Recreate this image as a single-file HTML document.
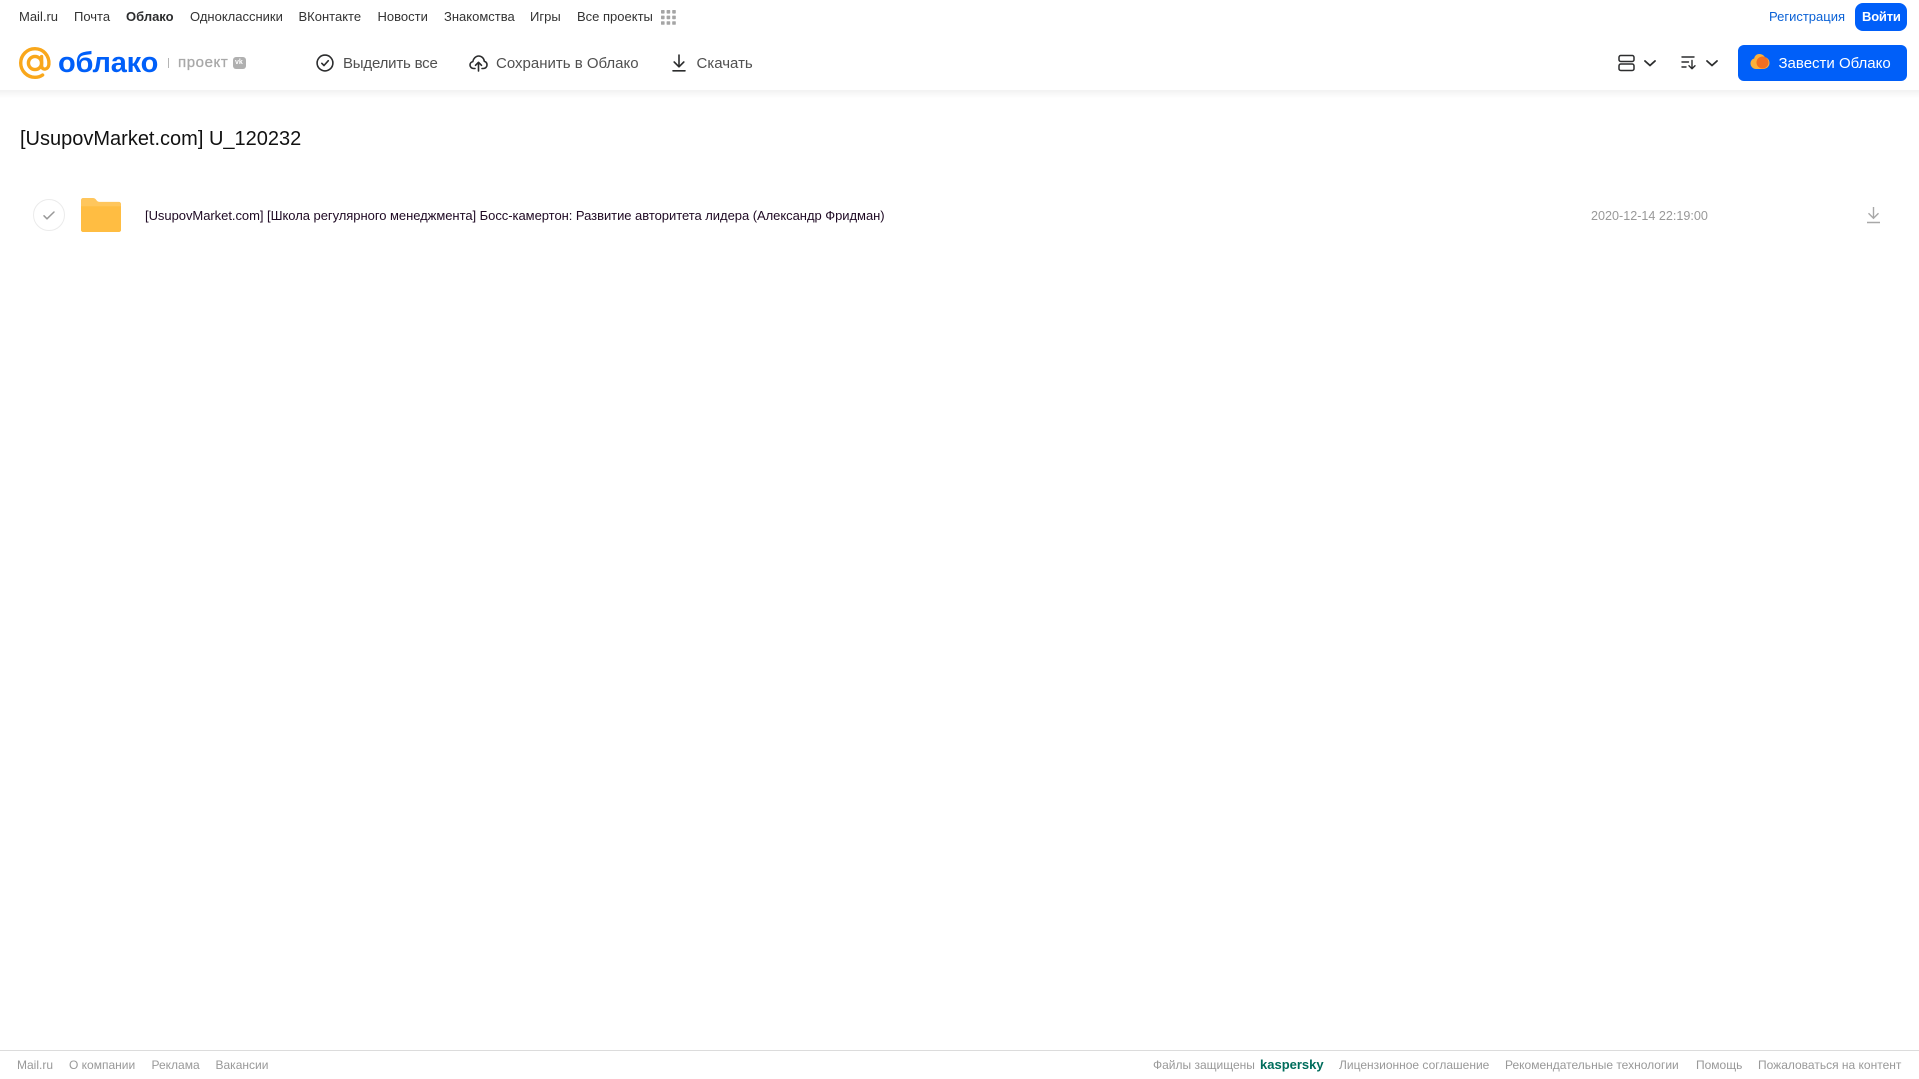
<!DOCTYPE html>
<html lang="ru">
<head>
<meta charset="utf-8">
<title>[UsupovMarket.com] U_120232</title>
<style>
html,body{margin:0;padding:0;background:#fff;}
body{position:relative;width:1919px;height:1079px;overflow:hidden;font-family:"Liberation Sans",Arial,sans-serif;color:#2c2d2e;filter:blur(.3px);}
a,span.t,h1,div.t{position:absolute;white-space:nowrap;text-decoration:none;margin:0;font-weight:400;}
svg{position:absolute;display:block;}
.n{top:9px;font-size:13px;line-height:16px;color:#333;}
.tb{top:55px;font-size:15px;line-height:18px;color:#505050;}
.f{top:1057px;font-size:12px;line-height:16px;color:#999;}
#shadow{position:absolute;left:0;top:90px;width:1919px;height:8px;background:linear-gradient(#f2f2f2,#fff);}
#fl{position:absolute;left:0;top:1050px;width:1919px;height:1px;background:#dcdcdc;}
.b{position:absolute;background:#005ff9;}
</style>
</head>
<body>
<div id="shadow"></div>
<a class="n" style="left:19px">Mail.ru</a>
<a class="n" style="left:74px">Почта</a>
<a class="n" style="left:126px;font-weight:700;color:#2c2d2e">Облако</a>
<a class="n" style="left:190px">Одноклассники</a>
<a class="n" style="left:298.500px">ВКонтакте</a>
<a class="n" style="left:377.500px">Новости</a>
<a class="n" style="left:444px">Знакомства</a>
<a class="n" style="left:530px">Игры</a>
<a class="n" style="left:577px">Все проекты</a>
<svg style="left:661px;top:10px" width="15" height="15" viewBox="0 0 15 15" fill="#a5a5a5"><rect x="0" y="0" width="3.6" height="3.6" rx=".7"/><rect x="5.6" y="0" width="3.6" height="3.6" rx=".7"/><rect x="11.2" y="0" width="3.6" height="3.6" rx=".7"/><rect x="0" y="5.6" width="3.6" height="3.6" rx=".7"/><rect x="5.6" y="5.6" width="3.6" height="3.6" rx=".7"/><rect x="11.2" y="5.6" width="3.6" height="3.6" rx=".7"/><rect x="0" y="11.2" width="3.6" height="3.6" rx=".7"/><rect x="5.6" y="11.2" width="3.6" height="3.6" rx=".7"/><rect x="11.2" y="11.2" width="3.6" height="3.6" rx=".7"/></svg>
<a class="n" style="left:1769px;color:#0b62d6">Регистрация</a>
<div class="b" style="left:1855px;top:3px;width:52px;height:28px;border-radius:8px"></div>
<a class="n" style="left:1862px;color:#fff;font-weight:700;font-size:13px;letter-spacing:-.2px">Войти</a>

<svg style="left:18px;top:46px" width="34" height="34" viewBox="0 0 34 34" fill="none"><circle cx="17" cy="17" r="6.6" stroke="#f9a71b" stroke-width="3.4"/><path d="M23.6 10.6V19.6C23.6 24.6 30.4 24.2 30.9 18.4C31.6 9.4 25 2.7 17 2.7C9.100 2.7 2.700 9.100 2.700 17C2.700 24.900 9.100 31.300 17 31.300C20 31.300 22.500 30.500 24.600 29" stroke="#f9a71b" stroke-width="3.400" stroke-linecap="round"/></svg>
<span class="t" style="left:58px;top:45px;font-size:29px;line-height:36px;font-weight:700;color:#005ff9;letter-spacing:-.2px">облако</span>
<div style="position:absolute;left:168px;top:58px;width:1px;height:10px;background:#b5b5b5"></div>
<span class="t" style="left:178px;top:54px;font-size:15px;line-height:18px;color:#a8a8a8;letter-spacing:.6px;-webkit-text-stroke:.3px #a8a8a8">проект</span>
<div style="position:absolute;left:233px;top:57px;width:13px;height:12px;border-radius:3px;background:#b0b0b0"></div>
<span class="t" style="left:235px;top:59px;font-size:7px;line-height:8px;font-weight:700;color:#fff">vk</span>

<svg style="left:316px;top:54px" width="18" height="18" viewBox="0 0 18 18" fill="none" stroke="#2c2d2e" stroke-width="1.600"><circle cx="9" cy="9" r="7.900"/><path d="M5.800 9.300L8 11.500L12.300 6.700" stroke-linecap="round" stroke-linejoin="round"/></svg>
<a class="tb" style="left:343px;letter-spacing:-.2px">Выделить все</a>
<svg style="left:469px;top:54px" width="19" height="18" viewBox="0 0 19 18" fill="none" stroke="#2c2d2e" stroke-width="1.600" stroke-linecap="round" stroke-linejoin="round"><path d="M6 14.500H4.700C2.600 14.500 1 13 1 11C1 9.300 2.200 7.900 3.800 7.600C4.300 4.600 6.700 2 9.700 2C12.700 2 15 4.400 15.300 7.300C17 7.700 18 9.200 18 11C18 13 16.400 14.500 14.300 14.500H13"/><path d="M9.500 17V8.500M6.500 11.300L9.500 8.300L12.500 11.300"/></svg>
<a class="tb" style="left:496px">Сохранить в Облако</a>
<svg style="left:671px;top:54px" width="16" height="18" viewBox="0 0 16 18" fill="none" stroke="#2c2d2e" stroke-width="1.600" stroke-linecap="round" stroke-linejoin="round"><path d="M8 1V12.500M3.200 8L8 12.800L12.800 8M2 16.800H14"/></svg>
<a class="tb" style="left:696.500px">Скачать</a>

<svg style="left:1618px;top:54px" width="18" height="18" viewBox="0 0 18 18" fill="none" stroke="#2c2d2e" stroke-width="1.500"><rect x="1" y="1.500" width="15" height="6" rx="1.800"/><rect x="1" y="10" width="15" height="6.500" rx="1.800"/></svg>
<svg style="left:1643px;top:59px" width="14" height="9" viewBox="0 0 14 9" fill="none" stroke="#2c2d2e" stroke-width="1.800" stroke-linecap="round" stroke-linejoin="round"><path d="M2 2L7 6.500L12 2"/></svg>
<svg style="left:1681px;top:55px" width="16" height="16" viewBox="0 0 16 16" fill="none" stroke="#2c2d2e" stroke-width="1.400" stroke-linecap="round"><path d="M1 2H13M1 7H7.500M1 12H5"/><path d="M11 5.500V13.500M8 10.800L11 13.800L14 10.800" stroke-linejoin="round"/></svg>
<svg style="left:1705px;top:59px" width="14" height="9" viewBox="0 0 14 9" fill="none" stroke="#2c2d2e" stroke-width="1.800" stroke-linecap="round" stroke-linejoin="round"><path d="M2 2L7 6.500L12 2"/></svg>

<div class="b" style="left:1738px;top:45px;width:169px;height:36px;border-radius:6px"></div>
<svg style="left:1750px;top:53px" width="20" height="18" viewBox="0 0 20 18"><path d="M9 1C6.500 1 4.500 3 4.200 5.500C2 6 .5 8 .5 10.500C.5 13.500 3 16 6 16H13C16.500 16 19.500 13.500 19.500 10C19.500 7 17.500 4.800 15 4.300C14 2.300 11.800 1 9 1Z" fill="#fbb03b"/><circle cx="12.500" cy="9.500" r="6" fill="#f26f21"/></svg>
<span class="t" style="left:1778.500px;top:55px;font-size:15px;line-height:18px;color:#fff">Завести Облако</span>

<h1 style="position:absolute;left:20px;top:126px;font-size:20px;line-height:26px;color:#111">[UsupovMarket.com] U_120232</h1>

<div style="position:absolute;left:33px;top:199px;width:30px;height:30px;border:1px solid #ebebeb;border-radius:50%"></div>
<svg style="left:42px;top:210px" width="14" height="11" viewBox="0 0 14 11" fill="none" stroke="#999" stroke-width="1.500" stroke-linecap="round" stroke-linejoin="round"><path d="M2 5.800L5 8.800L12 2"/></svg>
<svg style="left:81px;top:198px" width="40" height="34" viewBox="0 0 41 35" preserveAspectRatio="none"><path d="M2 0H12C14 0 15 1 16 2.500C16.600 3.400 17.500 4 19 4H39C40 4 41 5 41 6V33C41 34.200 40 35 39 35H2C1 35 0 34.200 0 33V2C0 1 1 0 2 0Z" fill="#ffc65c"/><path d="M0 8.500H41V33C41 34.200 40 35 39 35H2C1 35 0 34.200 0 33Z" fill="#ffbd42"/></svg>

<a style="left:145px;top:208px;font-size:13px;line-height:16px;color:#1f0a24;letter-spacing:-.04px">[UsupovMarket.com] [Школа регулярного менеджмента] Босс-камертон: Развитие авторитета лидера (Александр Фридман)</a>
<span class="t" style="left:1591px;top:208px;font-size:12.600px;line-height:16px;color:#999">2020-12-14 22:19:00</span>
<svg style="left:1866px;top:206px" width="15" height="18" viewBox="0 0 15 18" fill="none" stroke="#a8a8a8" stroke-width="1.400"><path d="M7.500 1V12M2.500 7.300L7.500 12.300L12.500 7.300M1 16.500H14"/></svg>

<div id="fl"></div>
<a class="f" style="left:17px">Mail.ru</a>
<a class="f" style="left:69px">О компании</a>
<a class="f" style="left:151.500px">Реклама</a>
<a class="f" style="left:215.500px">Вакансии</a>
<span class="t f" style="left:1153px">Файлы защищены</span>
<span class="t f" style="left:1260px;color:#006d5c;font-weight:700;font-size:13px">kaspersky</span>
<a class="f" style="left:1339px">Лицензионное соглашение</a>
<a class="f" style="left:1505px">Рекомендательные технологии</a>
<a class="f" style="left:1696px">Помощь</a>
<a class="f" style="left:1758px">Пожаловаться на контент</a>
</body>
</html>
